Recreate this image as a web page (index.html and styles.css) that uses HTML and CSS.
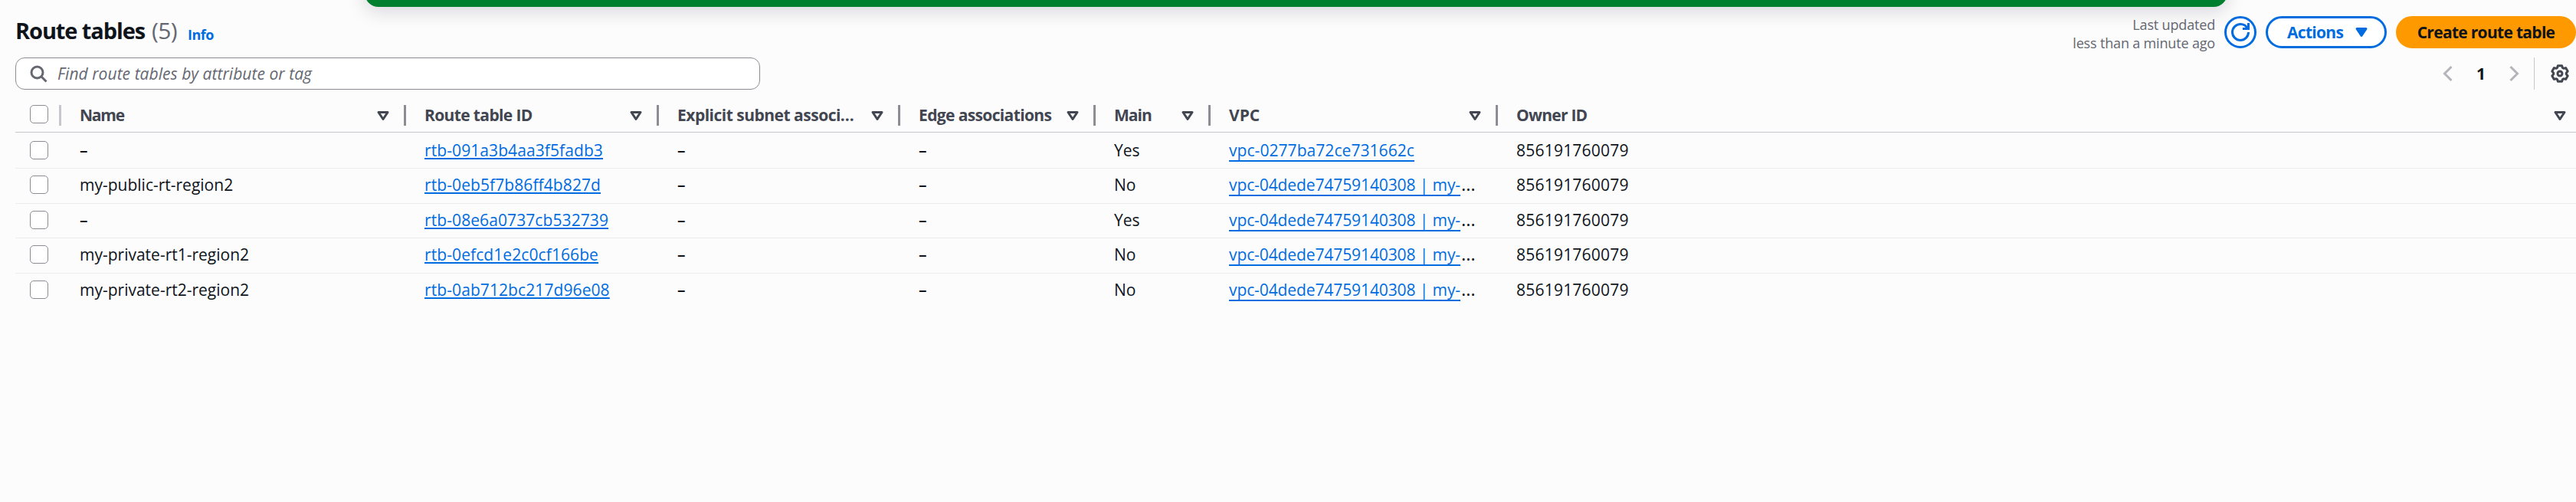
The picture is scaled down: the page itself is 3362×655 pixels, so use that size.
FILE: index.html
```html
<!DOCTYPE html>
<html lang="en">
<head>
<meta charset="utf-8">
<title>Route tables</title>
<link rel="stylesheet" href="styles.css">
</head>
<body>
<svg class="sprite" aria-hidden="true">
  <symbol id="sort" viewBox="0 0 16 16"><path d="M4 5h8l-4 6-4-6z" fill="none" stroke="currentColor" stroke-width="2" stroke-linejoin="round"/></symbol>
</svg>
<div class="flash"></div>
<main class="panel">
  <header class="header">
    <h1 class="title">Route tables</h1>
    <span class="counter">(5)</span>
    <a class="info">Info</a>
    <div class="actions">
      <p class="updated">Last updated<br>less than a minute ago</p>
      <button class="btn btn-round" aria-label="Refresh">
        <svg class="icon" viewBox="0 0 16 16" fill="none" stroke="currentColor" stroke-width="2"><path d="M15 8c0 3.87-3.13 7-7 7s-7-3.13-7-7 3.13-7 7-7c2.79 0 5.2 1.63 6.33 4M10 5h5V0"/></svg>
      </button>
      <button class="btn btn-actions"><span>Actions</span>
        <svg class="icon" viewBox="0 0 16 16"><path d="M4 5h8l-4 6-4-6z" fill="currentColor" stroke="currentColor" stroke-width="2" stroke-linejoin="round"/></svg>
      </button>
      <button class="btn btn-primary">Create route table</button>
    </div>
  </header>
  <div class="tools">
    <div class="search">
      <svg class="icon" viewBox="0 0 16 16" fill="none" stroke="currentColor" stroke-width="2"><circle cx="7" cy="7" r="5"/><path d="m15 15-4.5-4.5"/></svg>
      <span>Find route tables by attribute or tag</span>
    </div>
    <nav class="pages">
      <svg class="icon" viewBox="0 0 16 16" fill="none" stroke="currentColor" stroke-width="2"><path d="M11 2 5 8l6 6"/></svg>
      <span class="page">1</span>
      <svg class="icon" viewBox="0 0 16 16" fill="none" stroke="currentColor" stroke-width="2"><path d="m5 2 6 6-6 6"/></svg>
    </nav>
    <div class="settings">
      <svg class="icon" viewBox="0 0 24 24" fill="none" stroke="currentColor" stroke-width="3" stroke-linejoin="round"><path d="M9.4 1.7h5.2l.9 2.8 1.3.7 2.8-.6 2.6 4.5-1.9 2.2v1.4l1.9 2.2-2.6 4.5-2.8-.6-1.3.7-.9 2.8H9.4l-.9-2.8-1.3-.7-2.8.6-2.6-4.5 1.9-2.2v-1.4L1.8 9.1l2.6-4.5 2.8.6 1.3-.7z"/><circle cx="12" cy="12" r="3"/></svg>
    </div>
  </div>
  <div class="table">
    <div class="row head">
      <div class="cell pick"><i class="box"></i></div>
      <div class="cell"><span class="name">Name</span><svg class="icon"><use href="#sort"/></svg></div>
      <div class="cell"><span>Route table ID</span><svg class="icon"><use href="#sort"/></svg></div>
      <div class="cell"><span class="wide">Explicit subnet associ…</span><svg class="icon"><use href="#sort"/></svg></div>
      <div class="cell"><span>Edge associations</span><svg class="icon"><use href="#sort"/></svg></div>
      <div class="cell"><span class="main">Main</span><svg class="icon"><use href="#sort"/></svg></div>
      <div class="cell"><span class="caps">VPC</span><svg class="icon"><use href="#sort"/></svg></div>
      <div class="cell last"><span class="owner">Owner ID</span><svg class="icon"><use href="#sort"/></svg></div>
    </div>
    <div class="row first">
      <div class="cell pick"><i class="box"></i></div><div class="cell none">–</div><div class="cell"><a class="link id">rtb-091a3b4aa3f5fadb3</a></div><div class="cell none">–</div><div class="cell none">–</div><div class="cell">Yes</div><div class="cell"><a class="link vpc">vpc-0277ba72ce731662c</a></div><div class="cell num">856191760079</div>
    </div>
    <div class="row">
      <div class="cell pick"><i class="box"></i></div><div class="cell">my-public-rt-region2</div><div class="cell"><a class="link id">rtb-0eb5f7b86ff4b827d</a></div><div class="cell none">–</div><div class="cell none">–</div><div class="cell">No</div><div class="cell"><a class="link vpc named">vpc-04dede74759140308 | my-</a><span class="dots">…</span></div><div class="cell num">856191760079</div>
    </div>
    <div class="row low">
      <div class="cell pick"><i class="box"></i></div><div class="cell none">–</div><div class="cell"><a class="link id">rtb-08e6a0737cb532739</a></div><div class="cell none">–</div><div class="cell none">–</div><div class="cell">Yes</div><div class="cell"><a class="link vpc named">vpc-04dede74759140308 | my-</a><span class="dots">…</span></div><div class="cell num">856191760079</div>
    </div>
    <div class="row">
      <div class="cell pick"><i class="box"></i></div><div class="cell">my-private-rt1-region2</div><div class="cell"><a class="link id">rtb-0efcd1e2c0cf166be</a></div><div class="cell none">–</div><div class="cell none">–</div><div class="cell">No</div><div class="cell"><a class="link vpc named">vpc-04dede74759140308 | my-</a><span class="dots">…</span></div><div class="cell num">856191760079</div>
    </div>
    <div class="row final">
      <div class="cell pick"><i class="box"></i></div><div class="cell">my-private-rt2-region2</div><div class="cell"><a class="link id">rtb-0ab712bc217d96e08</a></div><div class="cell none">–</div><div class="cell none">–</div><div class="cell">No</div><div class="cell"><a class="link vpc named">vpc-04dede74759140308 | my-</a><span class="dots">…</span></div><div class="cell num">856191760079</div>
    </div>
  </div>
</main>
</body>
</html>
```
FILE: styles.css
```css
* { box-sizing: border-box; }
html { background: #fcfcfd; }
body {
  margin: 0;
  overflow: hidden;
  color: #0f141a;
  font: 400 21px/24px "Open Sans", "Noto Sans", sans-serif;
}
.sprite { position: absolute; width: 0; height: 0; }
.icon { display: block; width: 24px; height: 24px; flex: none; overflow: visible; }

/* Success notification, scrolled almost out of view */
.flash {
  position: absolute;
  top: -51px;
  left: 476px;
  width: 2431px;
  height: 60px;
  border-radius: 18px;
  background: #00802f;
  box-shadow: 0 6px 24px 1px rgba(0, 7, 22, 0.14);
}

.panel { padding-left: 20px; }

.header { display: flex; height: 75px; white-space: nowrap; }
.title { width: 178px; margin: 22px 0 0 0; font-size: 29px; line-height: 36px; font-weight: 700; letter-spacing: -1.1px; }
.counter { width: 38px; margin: 22px 0 0 0; font-size: 30px; line-height: 36px; letter-spacing: -0.6px; color: #656871; }
.info { margin: 33px 0 0 9px; font-size: 18px; font-weight: 700; letter-spacing: -0.5px; color: #006ce0; }
.actions { display: flex; margin-left: auto; padding-top: 21px; }
.updated {
  margin: -1px 12px 0 0;
  font-size: 18px;
  line-height: 24px;
  letter-spacing: -0.17px;
  text-align: right;
  color: #656871;
}
.btn {
  display: flex;
  align-items: center;
  height: 42px;
  padding: 0 27px;
  border: 3px solid #006ce0;
  border-radius: 21px;
  background: #fff;
  color: #006ce0;
  font: 700 21px/24px "Open Sans", "Noto Sans", sans-serif;
  letter-spacing: -0.7px;
  white-space: nowrap;
}
.btn-round { width: 42px; padding: 0; justify-content: center; margin-right: 12px; }
.btn-actions { width: 158px; padding: 0 18px 0 25px; justify-content: space-between; margin-right: 12px; }
.btn-primary { width: 235px; padding: 0; justify-content: center; border-color: #ff9900; background: #ff9900; color: #0f141a; }

.tools { display: flex; height: 42px; }
.search {
  display: flex;
  align-items: center;
  width: 972px;
  padding-left: 17px;
  border: 1px solid #8c8c94;
  border-radius: 12px;
  background: #fff;
  color: #656871;
}
.search .icon { margin: -1px 13px 0 0; }
.search span { font-style: italic; letter-spacing: 0.05px; padding-bottom: 1px; }
.pages { display: flex; align-items: center; margin-left: auto; color: #b4b4bb; }
.page { width: 62px; text-align: center; font-weight: 700; color: #0f141a; padding-bottom: 1px; }
.settings {
  display: flex;
  align-items: center;
  width: 55px;
  margin-left: 14px;
  padding-left: 21px;
  border-left: 1px solid #c6c6cd;
  color: #424650;
}

.row {
  display: grid;
  grid-template-columns: 60px 450px 330px 315px 255px 150px 375px 1fr;
  height: 46px;
  border-bottom: 1px solid #ebebf0;
}
.row.first { height: 47px; }
.row.first .cell { padding-top: 11px; }
.row.low { height: 45px; }
.row.final { border-bottom: 0; }
.cell { padding: 9px 0 0 24px; white-space: nowrap; }
.cell.pick { padding-left: 19px; }
.box { display: block; width: 24px; height: 24px; border: 1.5px solid #8c8c94; border-radius: 5px; background: #fff; }
.num { letter-spacing: 0.22px; }
.none { font-weight: 600; }

.head { height: 56px; border-bottom-color: #c6c6cd; color: #424650; font-weight: 700; letter-spacing: -0.63px; }
.head .cell {
  display: flex;
  justify-content: space-between;
  height: 27px;
  margin-top: 20px;
  padding: 1px 15px 0 24px;
  border-right: 3px solid #8c8c94;
}
.head .pick { padding: 0 0 0 19px; border-color: #c6c6cd; }
.head .last { padding-right: 9px; border-right: 0; }
.head .icon { margin-top: 1px; }
.name { letter-spacing: -1.2px; }
.main { letter-spacing: -1px; }
.wide { letter-spacing: -0.5px; }
.caps { letter-spacing: 0; }
.owner { letter-spacing: -0.75px; }

.link {
  color: #006ce0;
  text-decoration: underline;
  text-decoration-thickness: 2px;
  text-decoration-skip-ink: none;
}
.id { letter-spacing: 0.09px; text-underline-offset: 2px; }
.vpc { letter-spacing: 0.06px; text-underline-offset: 5px; }
.named { letter-spacing: -0.1px; }
.dots { margin-left: 1px; font-size: 24px; line-height: 20px; }
```
